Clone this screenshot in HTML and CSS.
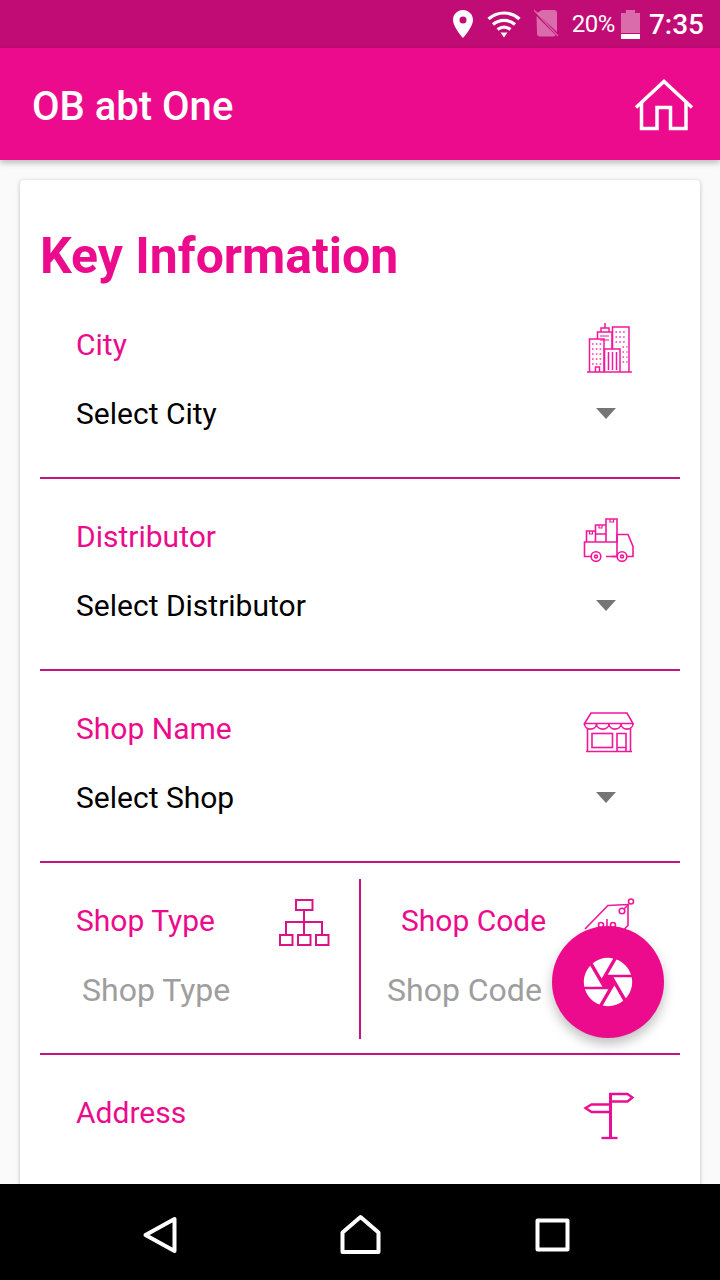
FILE: index.html
```html
<!DOCTYPE html>
<html lang="en">
<head>
  <meta charset="UTF-8">
  <meta name="viewport" content="width=device-width, initial-scale=1.0">
  <title>OB abt One</title>
  <link rel="stylesheet" href="styles.css">
</head>
<body>
  <div class="status-bar">
    <svg class="st-pin" viewBox="453 10 20 28"><path fill="#fff" fill-rule="evenodd" d="M463 10c-5.600 0-10 4.400-10 10 0 7 10 18 10 18s10-11 10-18c0-5.600-4.400-10-10-10zm0 6.500a3.500 3.500 0 1 1 0 7 3.500 3.500 0 0 1 0-7z"/></svg>
    <svg class="st-wifi" viewBox="488 10 34 30" fill="none" stroke="#fff" stroke-width="3.200">
      <path d="M489.500 20c9-8 22-8 31 0"/>
      <path d="M494 25.500c6.500-5.500 15.500-5.500 22 0"/>
      <path d="M498.500 30.500c4-3 9-3 13 0"/>
      <path d="M501.500 33.500h7l-3.500 5z" fill="#fff" stroke="none"/>
    </svg>
    <svg class="st-sim" viewBox="535 10 25 30"><path fill="#fff" opacity=".4" d="M543 11h12a3 3 0 0 1 3 3v19l-20-19zM537.500 17l19 19c-.5 1-1.500 1.500-2.500 1.500h-13a3 3 0 0 1-3-3z"/><path d="M535 11l24 26" stroke="#fff" stroke-width="1.500" opacity=".35"/></svg>
    <span class="st-pct">20%</span>
    <svg class="st-batt" viewBox="622 9 19 29"><path fill="#fff" opacity=".4" d="M622 12h5V9h9v3h5v20h-19z"/><rect x="622" y="33" width="19" height="5" fill="#fff"/></svg>
    <span class="st-time">7:35</span>
  </div>

  <header class="app-bar">
    <h1>OB abt One</h1>
    <svg class="home-icon" viewBox="634 76 60 53" fill="none" stroke="#fff" stroke-width="3.500">
      <path d="M636 105.500l28-26 28 26"/>
      <path d="M641.500 100v26.500h15.500v-21h13.500v21h15.500v-26.500"/>
    </svg>
  </header>

  <main class="content">
    <section class="card">
      <h2 class="card-title">Key Information</h2>

      <div class="field">
        <div class="field-head">
          <span class="field-label">City</span>
          <svg class="icon icon-city" viewBox="586 322 47 52" fill="none" stroke="#f2179a" stroke-width="1.500">
            <path d="M587 372h45"/>
            <path d="M589.500 372v-33h14.500v33"/>
            <path d="M597.500 339v-7h14.500v17"/>
            <path d="M601 332v-4h8v4M605 328v-5"/>
            <path d="M612.500 349v-22h16.500v45"/>
            <path d="M604.500 372v-23h15.500v23"/>
            <path d="M608.500 352v18M612.500 352v18M616.500 352v18"/>
            <path d="M595.500 372v-5h4v5"/>
            <path d="M600 336h9M600 340h9" stroke-width="1"/>
            <path d="M592 344h10M592 349h10M592 354h10M592 359h10M592 364h10" stroke-width="1.600" stroke-dasharray="1.600 2.200" opacity=".85"/>
            <path d="M615.500 332h11M615.500 337h11M615.500 342h11M622.500 347h5M622.500 352h5M622.500 357h5M622.500 362h5" stroke-width="1.600" stroke-dasharray="1.600 2.200" opacity=".85"/>
          </svg>
        </div>
        <div class="select-row">
          <span class="select-text">Select City</span>
          <span class="arrow"></span>
        </div>
      </div>

      <div class="field">
        <div class="field-head">
          <span class="field-label">Distributor</span>
          <svg class="icon icon-truck" viewBox="583 517 52 45" fill="none" stroke="#f2179a" stroke-width="1.600">
            <path d="M591 556.500h-6.500v-14.500h32.500v14.500h-11"/>
            <path d="M627 556.500h6v-10l-5-12h-11v8"/>
            <path d="M617 556.500h-5"/>
            <path d="M586.500 542v-11h9v11M595.500 542v-17h10.500v17M595.500 534h10.500M606 542v-23h11v23"/>
            <path d="M589.500 531v3h3v-3M599 525v3h3v-3M610 519v3h3.500v-3" stroke-width="1.200"/>
            <circle cx="596" cy="556.500" r="4.800"/>
            <circle cx="622" cy="556.500" r="4.800"/>
            <circle cx="596" cy="556.500" r="1.500"/>
            <circle cx="622" cy="556.500" r="1.500"/>
          </svg>
        </div>
        <div class="select-row">
          <span class="select-text">Select Distributor</span>
          <span class="arrow"></span>
        </div>
      </div>

      <div class="field">
        <div class="field-head">
          <span class="field-label">Shop Name</span>
          <svg class="icon icon-shop" viewBox="583 711 52 43" fill="none" stroke="#f2179a" stroke-width="1.600">
            <path d="M591 713h36l6 10.500H584.500z"/>
            <path d="M584.500 723.500c0 7.500 12 7.500 12 0 0 7.500 12.500 7.500 12.500 0 0 7.500 12 7.500 12 0 0 7.500 12 7.500 12 0"/>
            <path d="M587.500 728.500v23M630.500 728.500v23M586 751.500h46"/>
            <rect x="592" y="733.500" width="20.500" height="14"/>
            <path d="M617 751.500v-18h9v18M617 747.500h9"/>
          </svg>
        </div>
        <div class="select-row">
          <span class="select-text">Select Shop</span>
          <span class="arrow"></span>
        </div>
      </div>

      <div class="field-split">
        <div class="half half-left">
          <div class="field-head">
            <span class="field-label">Shop Type</span>
            <svg class="icon icon-tree" viewBox="278 898 52 49" fill="none" stroke="#dc1288" stroke-width="2">
              <rect x="296" y="900" width="16.500" height="10"/>
              <path d="M304 910v12M286 935v-13h36v13M304 922v13"/>
              <rect x="280" y="935" width="12.500" height="10"/>
              <rect x="298" y="935" width="12.500" height="10"/>
              <rect x="316" y="935" width="12.500" height="10"/>
            </svg>
          </div>
          <div class="placeholder">Shop Type</div>
        </div>
        <div class="split-line"></div>
        <div class="half half-right">
          <div class="field-head">
            <span class="field-label">Shop Code</span>
            <svg class="icon icon-tag" viewBox="583 897 52 50" fill="none" stroke="#f2179a" stroke-width="1.600">
              <path d="M585 929l23-23.500 20-1v21l-18 18"/>
              <circle cx="622" cy="911" r="2.800"/>
              <path d="M624 909l5-5"/>
              <circle cx="631" cy="901.500" r="2.500"/>
              <circle cx="601" cy="925" r="2.500"/>
              <circle cx="613" cy="925" r="2.500"/>
              <path d="M607 919v10"/>
            </svg>
          </div>
          <div class="placeholder">Shop Code</div>
        </div>
      </div>

      <div class="field field-last">
        <div class="field-head">
          <span class="field-label">Address</span>
          <svg class="icon icon-post" viewBox="583 1091 52 50" fill="none" stroke="#ea0f90" stroke-width="2.300">
            <path d="M609.500 1094h18l5 3.500-5 4h-18"/>
            <path d="M609.500 1104.500h-18l-6 3.500 6 4h18"/>
            <path d="M610.500 1093v45" stroke-width="3"/>
            <path d="M601.500 1138h16"/>
          </svg>
        </div>
      </div>
    </section>
  </main>

  <button class="fab">
    <svg viewBox="0 0 24 24" width="58" height="58"><path fill="#fff" d="M9.400 10.500l4.770-8.260C13.470 2.090 12.750 2 12 2c-2.400 0-4.600.85-6.320 2.250l3.660 6.350.06-.1zM21.540 9c-.92-2.920-3.150-5.260-6-6.340L11.880 9h9.660zm.26 1h-7.490l.29.5 4.760 8.250C21 16.970 22 14.610 22 12c0-.69-.07-1.350-.2-2zM8.540 12l-3.900-6.750C3.010 7.030 2 9.390 2 12c0 .69.07 1.350.2 2h7.490l-1.150-2zm-6.080 3c.92 2.920 3.150 5.260 6 6.340L12.120 15H2.460zm11.270 0l-3.900 6.760c.7.150 1.420.24 2.170.24 2.400 0 4.600-.85 6.320-2.250l-3.660-6.350-.93 1.600z"/></svg>
  </button>

  <nav class="nav-bar">
    <svg class="nav-back" viewBox="142 1215 36 40" fill="none" stroke="#fff" stroke-width="4" stroke-linejoin="round"><path d="M174.500 1219v32l-29-16z"/></svg>
    <svg class="nav-home" viewBox="340 1214 42 40" fill="none" stroke="#fff" stroke-width="4" stroke-linejoin="round"><path d="M360.500 1217l-18 15.500v19.500h36v-19.500z"/></svg>
    <svg class="nav-square" viewBox="535 1218 35 34" fill="none" stroke="#fff" stroke-width="4" stroke-linejoin="round"><rect x="537.500" y="1220.500" width="30" height="29"/></svg>
  </nav>
</body>
</html>
```

FILE: styles.css
```css
* {
  box-sizing: border-box;
}
html, body {
  margin: 0;
  height: 1280px;
  overflow: hidden;
}
body {
  position: relative;
  display: flex;
  flex-direction: column;
  font-family: Roboto, "Noto Sans", sans-serif;
  background: #fafafa;
}

/* status bar */
.status-bar {
  height: 48px;
  flex: none;
  display: flex;
  align-items: center;
  justify-content: flex-end;
  padding-right: 16px;
  background: #c10b75;
  color: #fff;
}
.st-pin {
  width: 20px;
  height: 28px;
  margin-right: 14px;
}
.st-wifi {
  width: 34px;
  height: 30px;
  margin-right: 13px;
}
.st-sim {
  width: 25px;
  height: 30px;
  margin-right: 13px;
}
.st-pct {
  font-size: 24px;
  letter-spacing: -0.5px;
  margin-right: 6px;
}
.st-batt {
  width: 19px;
  height: 29px;
  margin-right: 9px;
}
.st-time {
  font-size: 28px;
  font-weight: 500;
}

/* app bar */
.app-bar {
  height: 112px;
  flex: none;
  display: flex;
  align-items: center;
  justify-content: space-between;
  padding: 0 26px 0 32px;
  background: #ec0b8c;
  box-shadow: 0 3px 6px rgba(0, 0, 0, 0.25);
  position: relative;
  z-index: 1;
}
.app-bar h1 {
  margin: 4px 0 0;
  color: #fff;
  font-size: 40px;
  font-weight: 500;
}
.home-icon {
  width: 60px;
  height: 53px;
}

/* card */
.content {
  flex: 1;
  min-height: 0;
  overflow: hidden;
  padding: 20px 20px 0;
}
.card {
  background: #fff;
  border-radius: 4px;
  box-shadow: 0 1px 4px rgba(0, 0, 0, 0.25);
  padding: 0 20px;
  height: 1100px;
}
.card-title {
  margin: 0;
  height: 107px;
  padding-top: 46px;
  line-height: 60px;
  font-size: 49.900px;
  font-weight: 700;
  color: #ec0b8c;
}

/* fields */
.field {
  height: 192px;
  padding: 32px 0 0 36px;
  border-bottom: 2px solid #c4127f;
}
.field-last {
  border-bottom: none;
}
.field-head {
  display: flex;
  align-items: center;
  justify-content: space-between;
  height: 50px;
  padding-right: 46px;
}
.field-label {
  font-size: 30px;
  color: #ec0b8c;
}
.icon {
  flex: none;
  width: 52px;
  margin-right: -1px;
}
.icon-city {
  width: 47px;
  height: 52px;
  margin-top: 8px;
  margin-right: 1px;
}
.icon-truck {
  height: 45px;
  margin-top: 7px;
}
.icon-shop {
  height: 43px;
  margin-top: 9px;
}
.icon-tree {
  height: 49px;
  margin-top: 5px;
}
.icon-tag {
  height: 50px;
  margin-top: 4px;
}
.icon-post {
  height: 50px;
  margin-top: 8px;
}
.select-row {
  display: flex;
  align-items: center;
  justify-content: space-between;
  height: 50px;
  margin-top: 19px;
  padding-right: 64px;
}
.select-text {
  font-size: 30px;
  color: #000;
}
.arrow {
  width: 0;
  height: 0;
  border-left: 10px solid transparent;
  border-right: 10px solid transparent;
  border-top: 11px solid #757575;
}

/* two column row */
.field-split {
  display: flex;
  height: 192px;
  border-bottom: 2px solid #c4127f;
}
.half {
  width: 319px;
  padding-top: 32px;
}
.half-left {
  padding-left: 36px;
}
.half-left .field-head {
  padding-right: 30px;
}
.half-right {
  padding-left: 40px;
}
.half-right .field-head {
  padding-right: 0;
  width: 233px;
}
.split-line {
  width: 2px;
  height: 160px;
  margin-top: 16px;
  background: #c4127f;
}
.placeholder {
  height: 50px;
  line-height: 50px;
  margin-top: 20px;
  font-size: 32px;
  color: #9e9e9e;
}
.half-left .placeholder {
  padding-left: 6px;
}
.half-right .placeholder {
  margin-left: -14px;
  white-space: nowrap;
}

/* floating button */
.fab {
  position: absolute;
  left: 552px;
  top: 926px;
  width: 112px;
  height: 112px;
  padding: 0;
  border: none;
  border-radius: 50%;
  display: flex;
  align-items: center;
  justify-content: center;
  background: #ec0b8c;
  box-shadow: 0 6px 12px rgba(0, 0, 0, 0.25);
}

/* android nav bar */
.nav-bar {
  position: relative;
  height: 96px;
  flex: none;
  background: #000;
}
.nav-bar svg {
  position: absolute;
}
.nav-back {
  left: 142px;
  top: 31px;
  width: 36px;
  height: 40px;
}
.nav-home {
  left: 340px;
  top: 30px;
  width: 42px;
  height: 40px;
}
.nav-square {
  left: 535px;
  top: 34px;
  width: 35px;
  height: 34px;
}
```
